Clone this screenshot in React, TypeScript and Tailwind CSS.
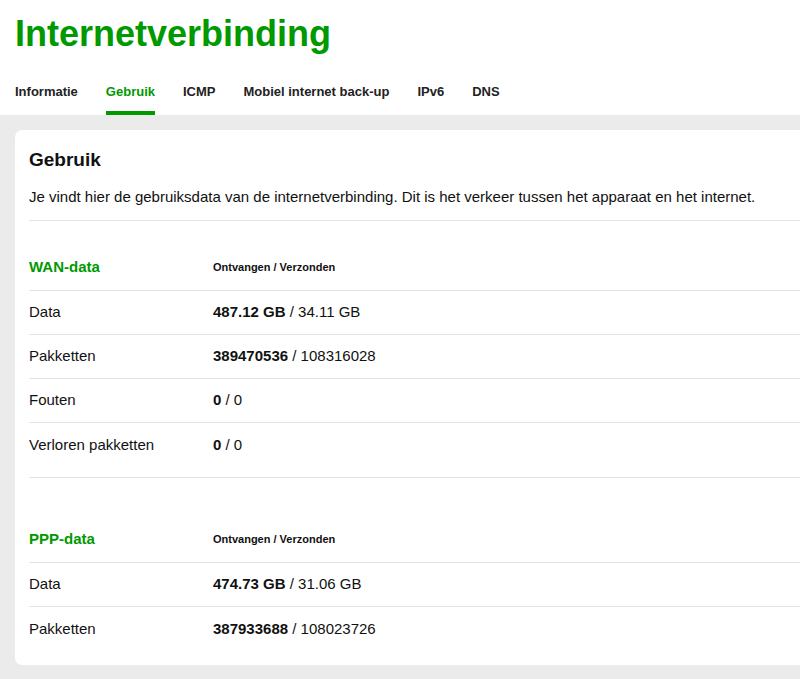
import React from 'react'

const tabs = ['Informatie', 'Gebruik', 'ICMP', 'Mobiel internet back-up', 'IPv6', 'DNS']

type Row = { label: string; rx: string; tx: string }

const wanRows: Row[] = [
  { label: 'Data', rx: '487.12 GB', tx: '34.11 GB' },
  { label: 'Pakketten', rx: '389470536', tx: '108316028' },
  { label: 'Fouten', rx: '0', tx: '0' },
  { label: 'Verloren pakketten', rx: '0', tx: '0' },
]

const pppRows: Row[] = [
  { label: 'Data', rx: '474.73 GB', tx: '31.06 GB' },
  { label: 'Pakketten', rx: '387933688', tx: '108023726' },
]

function DataTable({ title, rows, last }: { title: string; rows: Row[]; last?: boolean }) {
  return (
    <div className={last ? '' : 'pb-[10px] border-b border-[#e3e3e3]'}>
      <div className="flex items-center h-[47px] border-b border-[#e3e3e3]">
        <div className="w-[184px] text-[15px] font-bold text-[#009900]">{title}</div>
        <div className="text-[11px] font-bold text-[#111]">Ontvangen / Verzonden</div>
      </div>
      {rows.map((r, i) => (
        <div
          key={r.label}
          className={`flex items-center h-[44px] text-[15px] text-[#111] ${
            i < rows.length - 1 ? 'border-b border-[#e3e3e3]' : ''
          }`}
        >
          <div className="w-[184px]">{r.label}</div>
          <div>
            <span className="font-bold">{r.rx}</span> / {r.tx}
          </div>
        </div>
      ))}
    </div>
  )
}

export default function App() {
  return (
    <div className="min-h-screen bg-[#ebebeb]" style={{ fontFamily: "'Liberation Sans', Arial, sans-serif" }}>
      <div className="bg-white px-[15px]">
        <h1 className="pt-[15px] text-[36px] leading-[38px] font-bold text-[#009900]">Internetverbinding</h1>
        <nav className="flex gap-[28px] mt-[29px]">
          {tabs.map((t) => (
            <div
              key={t}
              className={`text-[13px] leading-[19px] font-bold pb-[10px] border-b-4 ${
                t === 'Gebruik' ? 'text-[#009900] border-[#009900]' : 'text-[#222] border-transparent'
              }`}
            >
              {t}
            </div>
          ))}
        </nav>
      </div>
      <div className="pt-[15px] pl-[15px] pb-[13px] overflow-hidden">
        <div className="bg-white rounded-l-[7px] -mr-4 pl-[14px] pb-[14px]">
          <div className="pt-[16px] pb-[12px] border-b border-[#e3e3e3]">
            <h2 className="text-[19px] leading-[28px] font-bold text-[#111]">Gebruik</h2>
            <p className="mt-[12px] text-[15px] leading-[22px] text-[#111]">
              Je vindt hier de gebruiksdata van de internetverbinding. Dit is het verkeer tussen het apparaat en het
              internet.
            </p>
          </div>
          <div className="pt-[23px]">
            <DataTable title="WAN-data" rows={wanRows} />
          </div>
          <div className="pt-[38px]">
            <DataTable title="PPP-data" rows={pppRows} last />
          </div>
        </div>
      </div>
    </div>
  )
}
